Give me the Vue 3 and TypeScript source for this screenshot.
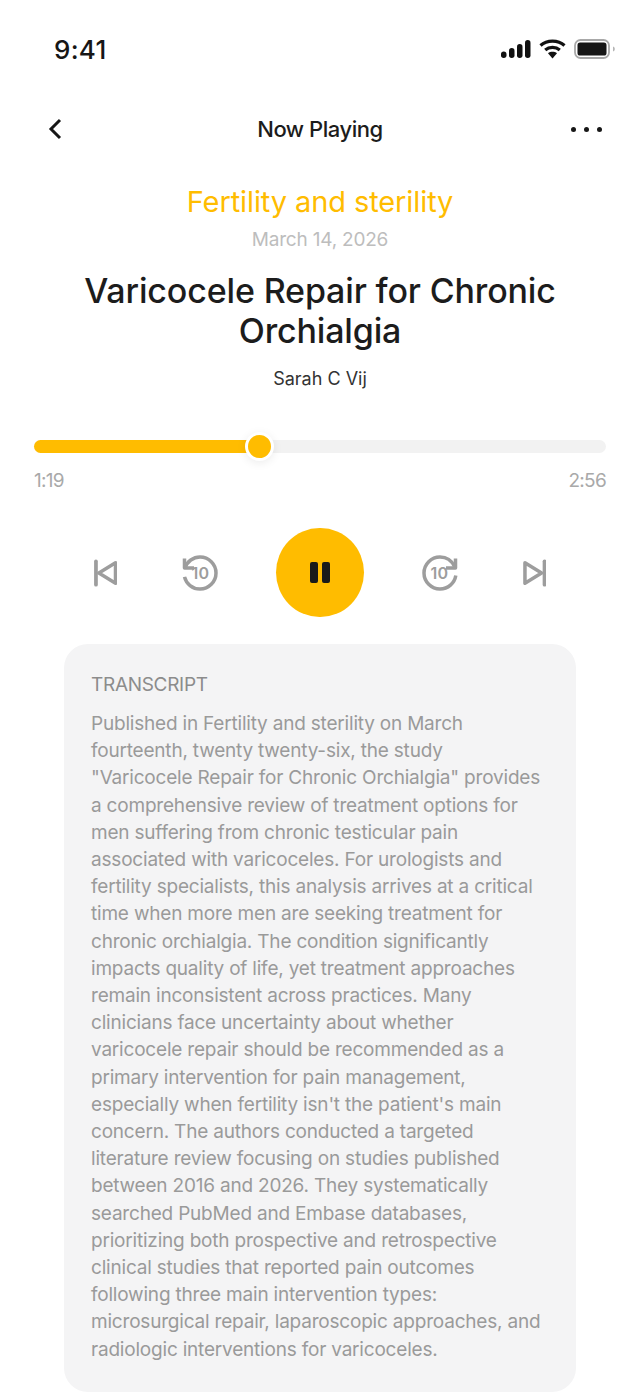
<script setup lang="ts">
const progress = 226 / 572 * 100

const lines: string[] = [
  'Published in Fertility and sterility on March',
  'fourteenth, twenty twenty-six, the study',
  '"Varicocele Repair for Chronic Orchialgia" provides',
  'a comprehensive review of treatment options for',
  'men suffering from chronic testicular pain',
  'associated with varicoceles. For urologists and',
  'fertility specialists, this analysis arrives at a critical',
  'time when more men are seeking treatment for',
  'chronic orchialgia. The condition significantly',
  'impacts quality of life, yet treatment approaches',
  'remain inconsistent across practices. Many',
  'clinicians face uncertainty about whether',
  'varicocele repair should be recommended as a',
  'primary intervention for pain management,',
  "especially when fertility isn't the patient's main",
  'concern. The authors conducted a targeted',
  'literature review focusing on studies published',
  'between 2016 and 2026. They systematically',
  'searched PubMed and Embase databases,',
  'prioritizing both prospective and retrospective',
  'clinical studies that reported pain outcomes',
  'following three main intervention types:',
  'microsurgical repair, laparoscopic approaches, and',
  'radiologic interventions for varicoceles.',
]
</script>

<template>
  <div class="screen">
    <div class="status">
      <span class="clock">9:41</span>
      <div class="status-icons">
        <svg width="30" height="20" viewBox="0 0 30 20">
          <rect x="0" y="12.5" width="5.5" height="6.5" rx="2.7" fill="#111" />
          <rect x="8" y="9" width="5.5" height="10" rx="2.7" fill="#111" />
          <rect x="16" y="5" width="5.5" height="14" rx="2.7" fill="#111" />
          <rect x="24" y="1" width="5.5" height="18" rx="2.7" fill="#111" />
        </svg>
        <svg width="27" height="20" viewBox="0 0 27 20">
          <path d="M1.5 6.5C8 .6 19 .6 25.5 6.5" fill="none" stroke="#111" stroke-width="3.2" />
          <path d="M6.2 11C10.2 7.6 16.8 7.6 20.8 11" fill="none" stroke="#111" stroke-width="3.2" />
          <path d="M9 14.2C11.6 12.4 15.4 12.4 18 14.2L13.5 19.5Z" fill="#111" />
        </svg>
        <svg class="battery" width="42" height="22" viewBox="0 0 42 22">
          <rect x="1" y="2" width="34" height="18" rx="5.5" fill="none" stroke="#a8a8a8" stroke-width="1.8" />
          <rect x="3.5" y="4.5" width="29" height="13" rx="2.6" fill="#161616" />
          <path d="M39 8.5C40.4 9 40.8 10 40.8 11S40.4 13 39 13.5Z" fill="#b5b5b5" />
        </svg>
      </div>
    </div>

    <div class="nav">
      <svg class="back-arrow" width="18" height="24" viewBox="0 0 18 24">
        <path d="M14 3L5 12L14 21" fill="none" stroke="#171717" stroke-width="3" stroke-linejoin="miter" />
      </svg>
      <span class="nav-title">Now Playing</span>
      <div class="dots"><i></i><i></i><i></i></div>
    </div>

    <div class="info">
      <div class="category">Fertility and sterility</div>
      <div class="date">March 14, 2026</div>
      <h1>Varicocele Repair for Chronic<br />Orchialgia</h1>
      <div class="author">Sarah C Vij</div>
    </div>

    <div class="player">
      <div class="track">
        <div class="fill" :style="{ width: progress + '%' }">
          <span class="knob"></span>
        </div>
      </div>
      <div class="times">
        <span>1:19</span>
        <span>2:56</span>
      </div>
    </div>

    <div class="controls">
      <svg class="edge" width="24" height="28" viewBox="0 0 24 28">
        <path d="M2 2V26" stroke="#9d9d9d" stroke-width="3.8" stroke-linecap="round" fill="none" />
        <path d="M22 3.5L5 14L22 24.5Z" stroke="#9d9d9d" stroke-width="3.6" stroke-linejoin="round" fill="none" />
      </svg>
      <div class="skip back">
        <svg width="36" height="36" viewBox="0 0 36 36">
          <path d="M2.5 3.5V13H12" stroke="#9d9d9d" stroke-width="3.5" fill="none" stroke-linejoin="round" />
          <path d="M3 13C5.2 6.4 11.2 2 18 2C26.8 2 34 9.2 34 18S26.8 34 18 34C10.5 34 4.2 28.8 2.5 21.8" stroke="#9d9d9d" stroke-width="3.5" fill="none" />
        </svg>
        <span class="skip-label">10</span>
      </div>
      <button class="play" type="button" aria-label="Pause">
        <i></i><i></i>
      </button>
      <div class="skip forward">
        <svg width="36" height="36" viewBox="0 0 36 36">
          <path d="M33.5 3.5V13H24" stroke="#9d9d9d" stroke-width="3.5" fill="none" stroke-linejoin="round" />
          <path d="M32.5 11.5C29.8 5.8 24.4 2 18 2C9.2 2 2 9.2 2 18S9.2 34 18 34C26 34 32.6 28.1 33.8 20.5" stroke="#9d9d9d" stroke-width="3.5" fill="none" />
        </svg>
        <span class="skip-label">10</span>
      </div>
      <svg class="edge next" width="24" height="28" viewBox="0 0 24 28">
        <path d="M22 2V26" stroke="#9d9d9d" stroke-width="3.8" stroke-linecap="round" fill="none" />
        <path d="M2 3.5L19 14L2 24.5Z" stroke="#9d9d9d" stroke-width="3.6" stroke-linejoin="round" fill="none" />
      </svg>
    </div>

    <div class="card">
      <div class="card-title">TRANSCRIPT</div>
      <div class="card-body">
        <div v-for="line in lines" :key="line">{{ line }}</div>
      </div>
    </div>
  </div>
</template>

<style>
html, body {
  margin: 0;
  background: #fff;
}
</style>

<style scoped>
.screen {
  width: 640px;
  height: 1392px;
  overflow: hidden;
  background: #fff;
  font-family: Inter, "Liberation Sans", sans-serif;
  color: #1c1c1c;
}

.status {
  height: 98px;
  box-sizing: border-box;
  padding: 0 24px 0 54px;
  display: flex;
  align-items: center;
  justify-content: space-between;
}
.clock {
  font-size: 26px;
  font-weight: 500;
  letter-spacing: 0.3px;
  color: #161616;
}
.status-icons {
  display: flex;
  align-items: center;
  gap: 8px;
}

.nav {
  height: 62px;
  padding: 0 38px;
  display: grid;
  grid-template-columns: 1fr auto 1fr;
  align-items: center;
}
.back-arrow {
  margin-left: 8px;
}
.nav-title {
  font-size: 22px;
  font-weight: 500;
  letter-spacing: -0.45px;
}
.dots {
  justify-self: end;
  display: flex;
  gap: 8px;
}
.dots i {
  width: 5px;
  height: 5px;
  border-radius: 50%;
  background: #171717;
}

.info {
  text-align: center;
  padding-top: 23px;
}
.category {
  font-size: 29px;
  line-height: 38px;
  color: #ffbc00;
  letter-spacing: -0.1px;
}
.date {
  font-size: 19px;
  line-height: 26px;
  margin-top: 6px;
  color: #bdbdbd;
  letter-spacing: -0.2px;
}
h1 {
  margin: 18px 0 0;
  font-size: 34px;
  line-height: 40px;
  font-weight: 500;
  letter-spacing: -0.15px;
  color: #1c1c1c;
}
.author {
  margin-top: 16px;
  font-size: 18px;
  line-height: 24px;
  letter-spacing: 0;
  color: #333;
}

.player {
  padding: 49px 34px 0;
}
.track {
  height: 13px;
  border-radius: 7px;
  background: #f2f2f2;
}
.fill {
  position: relative;
  height: 100%;
  border-radius: 7px;
  background: #ffbc00;
}
.knob {
  position: absolute;
  right: -14px;
  top: -8px;
  width: 23px;
  height: 23px;
  border: 3px solid #fff;
  border-radius: 50%;
  background: #ffbc00;
  box-shadow: 0 2px 10px rgba(0, 0, 0, 0.08);
}
.times {
  display: flex;
  justify-content: space-between;
  margin-top: 15px;
  font-size: 19px;
  line-height: 26px;
  letter-spacing: -0.7px;
  color: #a9a9a9;
}

.controls {
  margin-top: 34px;
  padding: 0 94px;
  height: 89px;
  display: flex;
  align-items: center;
}
.skip {
  position: relative;
  width: 36px;
  height: 36px;
}
.skip svg {
  display: block;
}
.skip.back {
  margin-left: 65px;
}
.skip.forward {
  margin-left: 58px;
}
.edge.next {
  margin-left: 65px;
}
.skip-label {
  position: absolute;
  inset: 0;
  display: flex;
  align-items: center;
  justify-content: center;
  font-size: 16px;
  font-weight: 600;
  letter-spacing: 0.3px;
  color: #9d9d9d;
}
.play {
  width: 89px;
  height: 89px;
  margin-left: 58px;
  padding: 0;
  border: 0;
  border-radius: 50%;
  background: #ffbc00;
  display: flex;
  align-items: center;
  justify-content: center;
  gap: 4px;
}
.play i {
  width: 8px;
  height: 21px;
  border-radius: 2px;
  background: #1a1a1a;
}

.card {
  margin: 27px 64px 0;
  height: 748px;
  box-sizing: border-box;
  padding: 28px 27px 0;
  border-radius: 24px;
  background: #f4f4f5;
}
.card-title {
  font-size: 19px;
  line-height: 26px;
  letter-spacing: -0.3px;
  color: #8c8c8c;
}
.card-body {
  margin-top: 12px;
  font-size: 19px;
  line-height: 27.2px;
  letter-spacing: -0.2px;
  color: #9a9a9a;
  white-space: nowrap;
}
</style>
